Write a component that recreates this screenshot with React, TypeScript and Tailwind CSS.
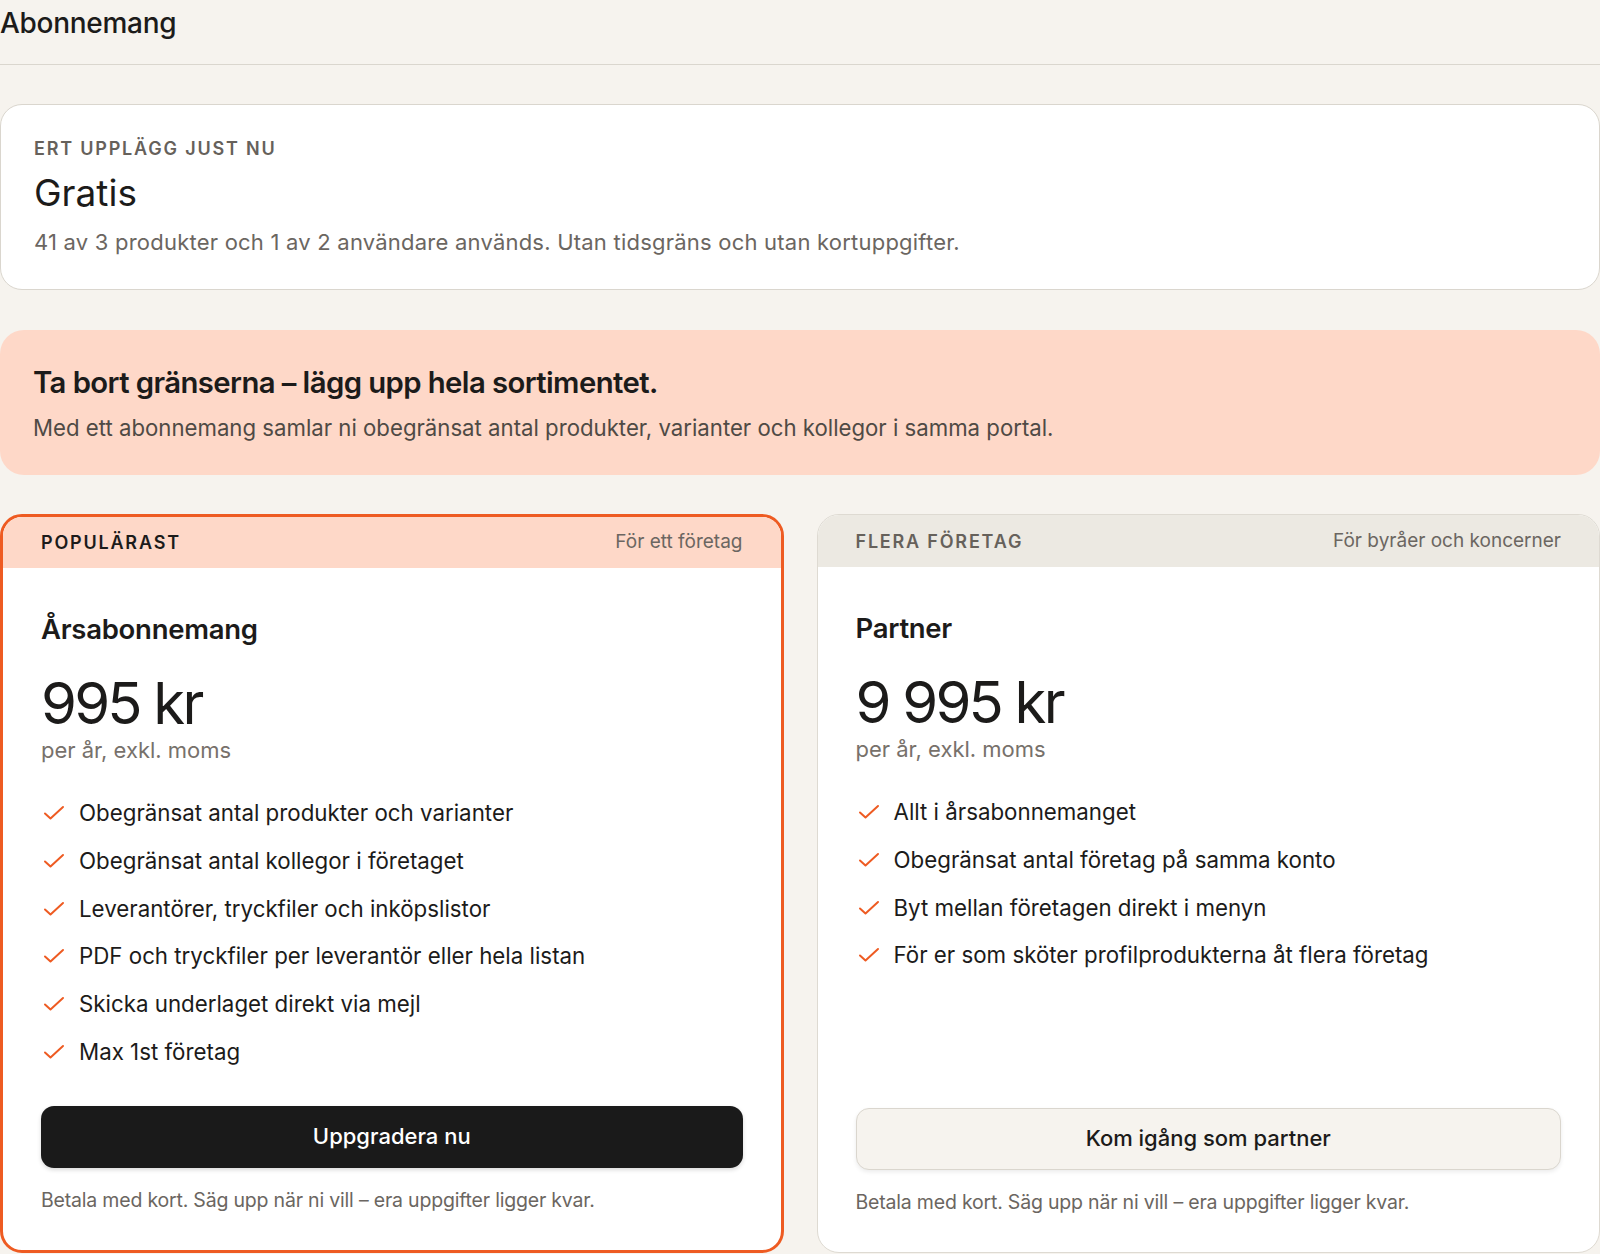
import React from "react";

const Check = () => (
  <svg width="22" height="16" viewBox="0 0 22 16" fill="none" className="ml-[2px] shrink-0">
    <path d="M2 8.5l5.5 5L20 2" stroke="#EE5B22" strokeWidth="2" strokeLinecap="round" strokeLinejoin="round" />
  </svg>
);

type Plan = {
  tag: string;
  sub: string;
  name: string;
  price: string;
  features: string[];
  cta: string;
  popular: boolean;
};

const plans: Plan[] = [
  {
    tag: "Populärast",
    sub: "För ett företag",
    name: "Årsabonnemang",
    price: "995 kr",
    features: [
      "Obegränsat antal produkter och varianter",
      "Obegränsat antal kollegor i företaget",
      "Leverantörer, tryckfiler och inköpslistor",
      "PDF och tryckfiler per leverantör eller hela listan",
      "Skicka underlaget direkt via mejl",
      "Max 1st företag",
    ],
    cta: "Uppgradera nu",
    popular: true,
  },
  {
    tag: "Flera företag",
    sub: "För byråer och koncerner",
    name: "Partner",
    price: "9 995 kr",
    features: [
      "Allt i årsabonnemanget",
      "Obegränsat antal företag på samma konto",
      "Byt mellan företagen direkt i menyn",
      "För er som sköter profilprodukterna åt flera företag",
    ],
    cta: "Kom igång som partner",
    popular: false,
  },
];

function PlanCard({ p }: { p: Plan }) {
  return (
    <div
      className={
        p.popular
          ? "flex flex-col overflow-hidden rounded-[22px] border-[3px] border-[#EE5B22] bg-white"
          : "flex flex-col overflow-hidden rounded-[22px] border border-[#DEDAD2] bg-white"
      }
    >
      <div
        className={
          p.popular
            ? "flex h-[51px] items-center justify-between bg-[#FED8C8] px-[38px]"
            : "flex h-[52px] items-center justify-between bg-[#ECE9E2] px-[38px]"
        }
      >
        <span
          className={
            p.popular
              ? "text-[18px] font-semibold uppercase tracking-[0.1em] text-[#1c1b1a]"
              : "text-[18px] font-semibold uppercase tracking-[0.1em] text-[#66615b]"
          }
        >
          {p.tag}
        </span>
        <span className="text-[19px] text-[#6b6661]">{p.sub}</span>
      </div>
      <div className="flex flex-1 flex-col px-[38px] pb-[37px] pt-[44px]">
        <h2 className="text-[27.5px] font-semibold leading-[34px] tracking-[-0.01em] text-[#1c1b1a]">{p.name}</h2>
        <div className="mt-[25px] text-[58px] font-normal leading-[64px] tracking-[-0.048em] text-[#1c1b1a]">{p.price}</div>
        <div className="text-[22px] leading-[30px] text-[#77716b]">per år, exkl. moms</div>
        <ul className="mt-[33px] flex flex-col gap-[17.8px]">
          {p.features.map((f) => (
            <li key={f} className="flex items-center gap-[14px] text-[22.3px] leading-[30px] text-[#1c1b1a]">
              <Check />
              <span>{f}</span>
            </li>
          ))}
        </ul>
        <div className="mt-auto pt-[39px]">
          {p.popular ? (
            <button className="flex h-[62px] w-full items-center justify-center rounded-[13px] bg-[#1A1A1A] text-[22px] font-medium text-white shadow-[0_2px_4px_rgba(0,0,0,0.15)]">
              {p.cta}
            </button>
          ) : (
            <button className="flex h-[62px] w-full items-center justify-center rounded-[13px] border border-[#DAD6CE] bg-[#F6F3EE] text-[22px] font-medium text-[#1c1b1a] shadow-[0_2px_4px_rgba(0,0,0,0.08)]">
              {p.cta}
            </button>
          )}
          <p className="mt-[19px] text-[19.5px] leading-[26px] tracking-[-0.01em] text-[#6b6661]">
            Betala med kort. Säg upp när ni vill – era uppgifter ligger kvar.
          </p>
        </div>
      </div>
    </div>
  );
}

export default function App() {
  return (
    <div
      className="min-h-[1254px] w-[1600px] bg-[#F6F3EE] text-[#1c1b1a]"
      style={{ fontFamily: "Inter, 'Noto Sans', 'Liberation Sans', sans-serif" }}
    >
      <header className="flex h-[65px] items-start border-b border-[#DAD6CE]">
        <h1 className="mt-[6px] text-[28px] font-medium leading-[34px] tracking-[-0.01em]">Abonnemang</h1>
      </header>
      <main className="flex flex-col pt-[39px]">
        <section className="rounded-[22px] border border-[#DAD6CE] bg-white px-[33px] pb-[32px] pt-[32px]">
          <div className="text-[18px] font-semibold uppercase leading-[24px] tracking-[0.1em] text-[#66615b]">
            Ert upplägg just nu
          </div>
          <div className="mt-[10px] text-[37px] leading-[44px] text-[#1c1b1a]">Gratis</div>
          <p className="mt-[12px] text-[22px] leading-[30px] tracking-[0.01em] text-[#6b6661]">
            41 av 3 produkter och 1 av 2 användare används. Utan tidsgräns och utan kortuppgifter.
          </p>
        </section>

        <section className="mt-[40px] rounded-[24px] bg-[#FED8C8] px-[33px] pb-[32px] pt-[35px]">
          <h2 className="text-[29.3px] font-semibold leading-[36px] tracking-[-0.02em] text-[#1c1b1a]">
            Ta bort gränserna – lägg upp hela sortimentet.
          </h2>
          <p className="mt-[12px] text-[22.2px] leading-[30px] text-[#4f4a45]">
            Med ett abonnemang samlar ni obegränsat antal produkter, varianter och kollegor i samma portal.
          </p>
        </section>

        <section className="mt-[39px] grid grid-cols-2 gap-[33px]">
          {plans.map((p) => (
            <PlanCard key={p.name} p={p} />
          ))}
        </section>
      </main>
    </div>
  );
}
